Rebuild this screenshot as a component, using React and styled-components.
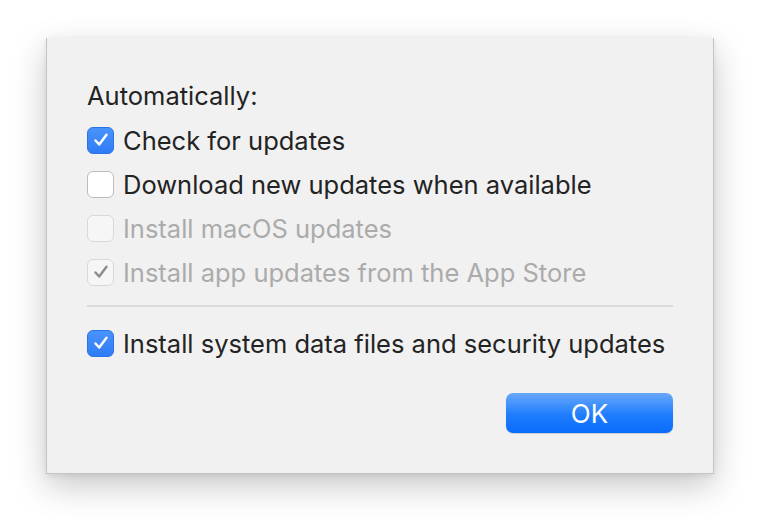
import React from "react";
import styled, { createGlobalStyle } from "styled-components";

const Global = createGlobalStyle`
  body {
    margin: 0;
    background: #ffffff;
    font-family: Inter, "Helvetica Neue", "Liberation Sans", sans-serif;
  }
`;

const Page = styled.div`
  width: 760px;
  height: 528px;
  padding: 38px 0 0 46px;
  box-sizing: border-box;
  overflow: hidden;
`;

const Sheet = styled.div`
  width: 668px;
  height: 436px;
  box-sizing: border-box;
  background: #f1f1f1;
  border: 1px solid #c4c4c4;
  border-top: none;
  box-shadow: 0 12px 32px rgba(0, 0, 0, 0.22), 0 2px 6px rgba(0, 0, 0, 0.08);
  padding: 36px 40px 40px 40px;
  display: flex;
  flex-direction: column;
`;

const Title = styled.div`
  height: 44px;
  line-height: 44px;
  font-size: 25.5px;
  color: #232323;
`;

const Row = styled.label`
  display: flex;
  align-items: center;
  gap: 9px;
  height: 44px;
  font-size: 25.5px;
  color: ${(p) => (p.$disabled ? "#ababab" : "#232323")};
`;

const Box = styled.span`
  width: 27px;
  height: 27px;
  box-sizing: border-box;
  border-radius: 6px;
  display: flex;
  align-items: center;
  justify-content: center;
  flex-shrink: 0;
  background: ${(p) =>
    p.$checked && !p.$disabled
      ? "linear-gradient(#4a93fb, #2f7cf6)"
      : p.$disabled
      ? "#f6f6f6"
      : "#ffffff"};
  border: 1px solid
    ${(p) =>
      p.$checked && !p.$disabled ? "#2a73e8" : p.$disabled ? "#d8d8d8" : "#bcbcbc"};
`;

const Separator = styled.div`
  height: 2px;
  background: #dadada;
  margin: 11px 0 14px 0;
`;

const Footer = styled.div`
  display: flex;
  justify-content: flex-end;
  margin-top: auto;
`;

const Button = styled.button`
  width: 167px;
  height: 40px;
  border: none;
  border-radius: 7px;
  background: linear-gradient(#69a8fb, #1f7dfd 55%, #0a6bfd);
  color: #ffffff;
  font-family: inherit;
  font-size: 26px;
  box-shadow: 0 1px 1px rgba(0, 0, 0, 0.15);
`;

function Check({ checked, disabled }) {
  return (
    <Box $checked={checked} $disabled={disabled}>
      {checked && (
        <svg width="18" height="18" viewBox="0 0 18 18">
          <path
            d="M3.5 9.5 L7.2 13.5 L14.5 3.8"
            fill="none"
            stroke={disabled ? "#8d8d8d" : "#ffffff"}
            strokeWidth="2.5"
            strokeLinecap="round"
            strokeLinejoin="round"
          />
        </svg>
      )}
    </Box>
  );
}

const options = [
  { label: "Check for updates", checked: true },
  { label: "Download new updates when available", checked: false },
  { label: "Install macOS updates", checked: false, disabled: true },
  { label: "Install app updates from the App Store", checked: true, disabled: true },
];

export default function App() {
  return (
    <>
      <Global />
      <Page>
        <Sheet>
          <Title>Automatically:</Title>
          {options.map((o) => (
            <Row key={o.label} $disabled={o.disabled}>
              <Check checked={o.checked} disabled={o.disabled} />
              {o.label}
            </Row>
          ))}
          <Separator />
          <Row>
            <Check checked />
            Install system data files and security updates
          </Row>
          <Footer>
            <Button>OK</Button>
          </Footer>
        </Sheet>
      </Page>
    </>
  );
}
